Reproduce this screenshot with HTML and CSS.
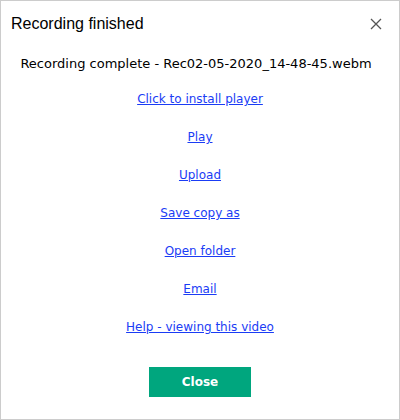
FILE: index.html
```html
<!DOCTYPE html>
<html>
<head>
<meta charset="utf-8">
<link rel="stylesheet" href="styles.css">
</head>
<body>
<div class="window">
  <div class="titlebar">
    <span class="title">Recording finished</span>
    <span class="close-x" aria-label="Close">
      <svg width="12" height="12" viewBox="0 0 12 12"><path d="M1 1L11 11M11 1L1 11" stroke="#555" stroke-width="1.3" fill="none"/></svg>
    </span>
  </div>
  <div class="message">Recording complete - Rec02-05-2020_14-48-45.webm</div>
  <ul class="links">
    <li><a href="#">Click to install player</a></li>
    <li><a href="#">Play</a></li>
    <li><a href="#">Upload</a></li>
    <li><a href="#">Save copy as</a></li>
    <li><a href="#">Open folder</a></li>
    <li><a href="#">Email</a></li>
    <li><a href="#">Help - viewing this video</a></li>
  </ul>
  <div class="actions">
    <button class="btn-close">Close</button>
  </div>
</div>
</body>
</html>
```
FILE: styles.css
```css
* { box-sizing: border-box; }
html, body { margin: 0; padding: 0; background: #fff; }
.window {
  width: 400px;
  height: 420px;
  border: 1px solid #cccccc;
  background: #fff;
  font-family: "DejaVu Sans", Verdana, sans-serif;
  color: #000;
  display: flex;
  flex-direction: column;
}
.titlebar {
  display: flex;
  justify-content: space-between;
  align-items: center;
  height: 44px;
  padding: 2px 17px 0 10px;
}
.title { font-family: "Liberation Sans", Arial, sans-serif; font-size: 16px; }
.close-x { display: flex; width: 12px; height: 12px; }
.message {
  text-align: center;
  font-size: 13px;
  line-height: 15px;
  margin-top: 11px;
  padding-right: 8px;
}
.links {
  list-style: none;
  margin: 21px 0 0 0;
  padding: 0;
  display: flex;
  flex-direction: column;
  align-items: center;
  gap: 23px;
}
.links li { font-size: 12px; line-height: 15px; }
.links a { color: #1a3cf5; text-decoration: underline; }
.actions {
  display: flex;
  justify-content: center;
  margin-top: 32px;
}
.btn-close {
  width: 102px;
  height: 30px;
  border: none;
  background: #00a67e;
  color: #fff;
  font-family: "DejaVu Sans", Verdana, sans-serif;
  font-weight: bold;
  font-size: 12px;
  padding: 0;
}
```
